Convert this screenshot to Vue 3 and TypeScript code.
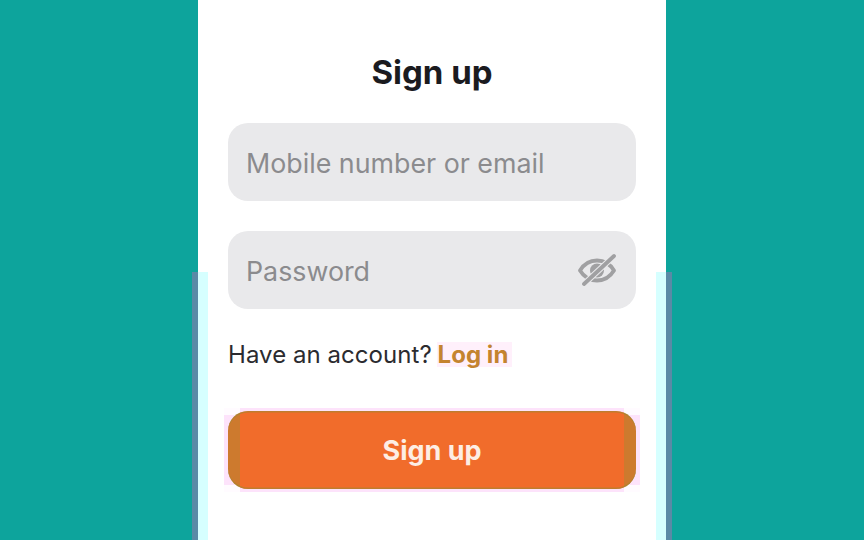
<script setup lang="ts">
const title = 'Sign up'
</script>

<template>
  <div class="page">
    <main class="sheet">
      <div class="edge edge-left"></div>
      <div class="edge edge-right"></div>
      <h1 class="title">{{ title }}</h1>
      <div class="field"><span class="placeholder">Mobile number or email</span></div>
      <div class="field">
        <span class="placeholder">Password</span>
        <svg class="eye" viewBox="0 0 38 34" width="38" height="34" fill="none" aria-hidden="true">
          <path d="M2 17.5C6 11 12 7.5 19 7.5S32 11 36 17.5C32 24 26 27.5 19 27.5S6 24 2 17.5Z" stroke="#a0a0a2" stroke-width="3.8" stroke-linejoin="round"/>
          <circle cx="19" cy="17.5" r="7" fill="#a0a0a2"/>
          <path d="M6 31 36 3" stroke="#e9e9eb" stroke-width="6"/>
          <path d="M6 31 36 3" stroke="#a0a0a2" stroke-width="3.8" stroke-linecap="round"/>
        </svg>
      </div>
      <p class="login">Have an account? <a class="link">Log in</a></p>
      <div class="button-wrap">
        <span class="halo halo-outer"></span>
        <span class="halo halo-wide"></span>
        <span class="halo halo-tall"></span>
        <button class="submit" type="button">{{ title }}</button>
      </div>
    </main>
  </div>
</template>

<style>
html, body { margin: 0; padding: 0; }
</style>

<style scoped>
.page {
  width: 864px;
  height: 540px;
  overflow: hidden;
  background: #0da49c;
  display: flex;
  justify-content: center;
  font-family: Inter, "Liberation Sans", sans-serif;
}
.sheet {
  position: relative;
  width: 468px;
  height: 540px;
  box-sizing: border-box;
  padding: 50px 30px 0;
  background: #fff;
}
.edge {
  position: absolute;
  top: 272px;
  bottom: 0;
  width: 10px;
  background: #d6ffff;
}
.edge::after {
  content: "";
  position: absolute;
  top: 0;
  bottom: 0;
  width: 6px;
  background: #5a8aa6;
}
.edge-left { left: 0; }
.edge-left::after { left: -6px; }
.edge-right { right: 0; }
.edge-right::after { right: -6px; }
.title {
  margin: 0 0 29px;
  font-size: 33px;
  line-height: 45px;
  font-weight: 700;
  color: #1b1b1f;
  text-align: center;
}
.field {
  height: 78px;
  margin-bottom: 30px;
  padding: 0 18px;
  box-sizing: border-box;
  border-radius: 20px;
  background: #e9e9eb;
  display: flex;
  align-items: center;
  justify-content: space-between;
}
.title + .field { margin-top: -1px; }
.placeholder {
  padding-top: 2px;
  font-size: 26.8px;
  color: #8b8b8e;
}
.eye { margin-right: 2px; }
.login {
  margin: 0;
  font-size: 24px;
  line-height: 32px;
  letter-spacing: 0.05px;
  color: #2b2b2f;
}
.link {
  display: inline-block;
  margin-left: -2px;
  padding: 0 4px 0 1px;
  line-height: 25px;
  background: #fff0fb;
  font-weight: 700;
  color: #c4842f;
}
.button-wrap {
  position: relative;
  margin-top: 40px;
  height: 78px;
}
.halo {
  position: absolute;
}
.halo-outer { left: -4px; right: -4px; top: -3px; bottom: -3px; background: #fffbff; }
.halo-wide { left: -4px; right: -4px; top: 4px; bottom: 4px; background: #fde3fb; }
.halo-tall { left: 12px; right: 12px; top: -3px; bottom: -3px; background: #fde3fb; }
.submit {
  position: relative;
  display: block;
  width: 100%;
  height: 78px;
  border: 0;
  border-radius: 20px;
  font: 700 27px Inter, "Liberation Sans", sans-serif;
  color: #fdeee4;
  background: linear-gradient(90deg, #cd7a2e 12px, #f16c2b 12px, #f16c2b calc(100% - 12px), #cd7a2e calc(100% - 12px));
  box-shadow: inset 0 1.5px 0 rgba(150, 140, 50, 0.55), inset 0 -1.5px 0 rgba(150, 140, 50, 0.55);
}
</style>
